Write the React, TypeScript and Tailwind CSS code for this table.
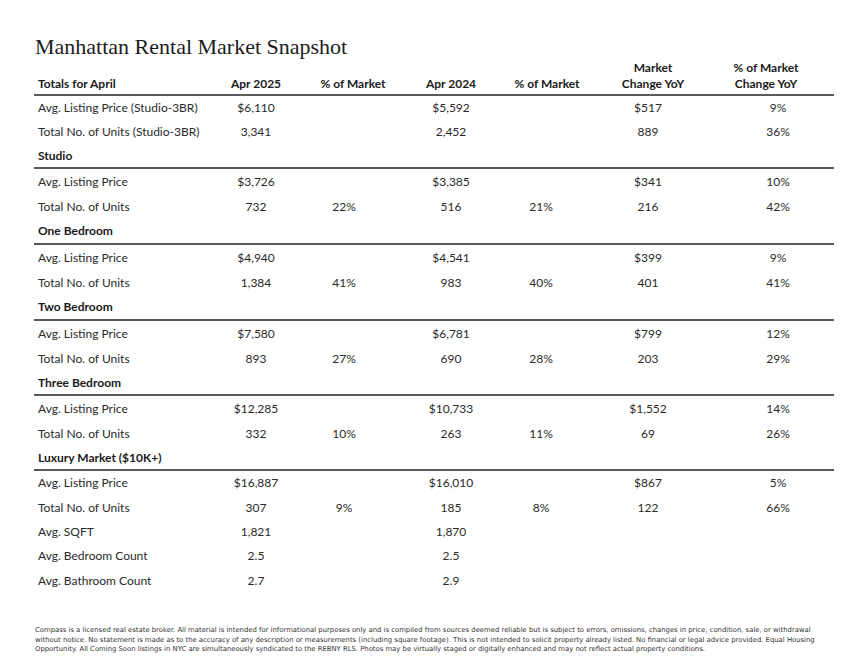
import React from "react";

type Row = string[];

const top: Row[] = [
  ["Avg. Listing Price (Studio-3BR)", "$6,110", "", "$5,592", "", "$517", "9%"],
  ["Total No. of Units (Studio-3BR)", "3,341", "", "2,452", "", "889", "36%"],
];

const sections: { title: string; rows: Row[]; heights: string[] }[] = [
  {
    title: "Studio",
    rows: [
      ["Avg. Listing Price", "$3,726", "", "$3,385", "", "$341", "10%"],
      ["Total No. of Units", "732", "22%", "516", "21%", "216", "42%"],
    ],
    heights: ["h-[25px]", "h-[25px]"],
  },
  {
    title: "One Bedroom",
    rows: [
      ["Avg. Listing Price", "$4,940", "", "$4,541", "", "$399", "9%"],
      ["Total No. of Units", "1,384", "41%", "983", "40%", "401", "41%"],
    ],
    heights: ["h-[25px]", "h-[25px]"],
  },
  {
    title: "Two Bedroom",
    rows: [
      ["Avg. Listing Price", "$7,580", "", "$6,781", "", "$799", "12%"],
      ["Total No. of Units", "893", "27%", "690", "28%", "203", "29%"],
    ],
    heights: ["h-[25px]", "h-[25px]"],
  },
  {
    title: "Three Bedroom",
    rows: [
      ["Avg. Listing Price", "$12,285", "", "$10,733", "", "$1,552", "14%"],
      ["Total No. of Units", "332", "10%", "263", "11%", "69", "26%"],
    ],
    heights: ["h-[25px]", "h-[25px]"],
  },
  {
    title: "Luxury Market ($10K+)",
    rows: [
      ["Avg. Listing Price", "$16,887", "", "$16,010", "", "$867", "5%"],
      ["Total No. of Units", "307", "9%", "185", "8%", "122", "66%"],
      ["Avg. SQFT", "1,821", "", "1,870", "", "", ""],
      ["Avg. Bedroom Count", "2.5", "", "2.5", "", "", ""],
      ["Avg. Bathroom Count", "2.7", "", "2.9", "", "", ""],
    ],
    heights: ["h-[24px]", "h-[25px]", "h-[24px]", "h-[24px]", "h-[25px]"],
  },
];

const gridCols = "grid grid-cols-[171px_102px_92px_104px_88px_124px_102px_17px]";

const cellPad = [
  "pl-[4px] text-left",
  "text-center",
  "text-center pr-[18px]",
  "text-center",
  "text-center pr-[12px]",
  "text-center pr-[10px]",
  "text-center pl-[24px]",
];

function DataRow({ row, h }: { row: Row; h: string }) {
  return (
    <div className={`${gridCols} ${h} items-center text-[12px] text-[#2a2a2a]`}>
      {row.map((c, i) => (
        <div key={i} className={cellPad[i]}>
          {c}
        </div>
      ))}
      <div />
    </div>
  );
}

function Line() {
  return <div className="h-[2px] w-full bg-[#5a5a5a]" />;
}

function Heading({ title, h }: { title: string; h: string }) {
  return (
    <div className={`${h} flex items-center pl-[4px] text-[12px] font-bold text-[#1a1a1a]`}>
      {title}
    </div>
  );
}

export default function App() {
  return (
    <div
      className="w-[848px] h-[669px] bg-white overflow-hidden"
      style={{ fontFamily: "Lato, 'Liberation Sans', sans-serif" }}
    >
      <div className="pl-[34px] pt-[36px] w-[834px]">
        <div
          className="text-[22px] leading-none text-[#1c1c1c] pl-[1px]"
          style={{ fontFamily: "'Liberation Serif', serif" }}
        >
          Manhattan Rental Market Snapshot
        </div>
        <div className={`${gridCols} h-[36px] items-end pb-[2px] text-[12px] font-bold leading-[16px] text-[#1a1a1a]`}>
          <div className="pl-[4px]">Totals for April</div>
          <div className="text-center">Apr 2025</div>
          <div className="text-center">% of Market</div>
          <div className="text-center">Apr 2024</div>
          <div className="text-center">% of Market</div>
          <div className="text-center">
            Market
            <br />
            Change YoY
          </div>
          <div className="text-center">
            % of Market
            <br />
            Change YoY
          </div>
          <div />
        </div>
        <Line />
        <DataRow row={top[0]} h="h-[24px]" />
        <DataRow row={top[1]} h="h-[24px]" />
        <Heading title="Studio" h="h-[23px]" />
        {sections.map((s, si) => (
          <div key={si}>
            <Line />
            {s.rows.map((r, ri) => (
              <DataRow key={ri} row={r} h={s.heights[ri]} />
            ))}
            {si + 1 < sections.length && (
              <Heading title={sections[si + 1].title} h={si >= 2 ? "h-[23px]" : "h-[24px]"} />
            )}
          </div>
        ))}
        <div
          className="mt-[33px] pl-[1px] text-[6.85px] leading-[9.5px] text-[#333] whitespace-nowrap"
          style={{ fontFamily: "'DejaVu Sans', sans-serif" }}
        >
          <div>
            Compass is a licensed real estate broker. All material is intended for informational purposes only and is compiled from sources deemed reliable but is subject to errors, omissions, changes in price, condition, sale, or withdrawal
          </div>
          <div>
            without notice. No statement is made as to the accuracy of any description or measurements (including square footage). This is not intended to solicit property already listed. No financial or legal advice provided. Equal Housing
          </div>
          <div>
            Opportunity. All Coming Soon listings in NYC are simultaneously syndicated to the REBNY RLS. Photos may be virtually staged or digitally enhanced and may not reflect actual property conditions.
          </div>
        </div>
      </div>
    </div>
  );
}
